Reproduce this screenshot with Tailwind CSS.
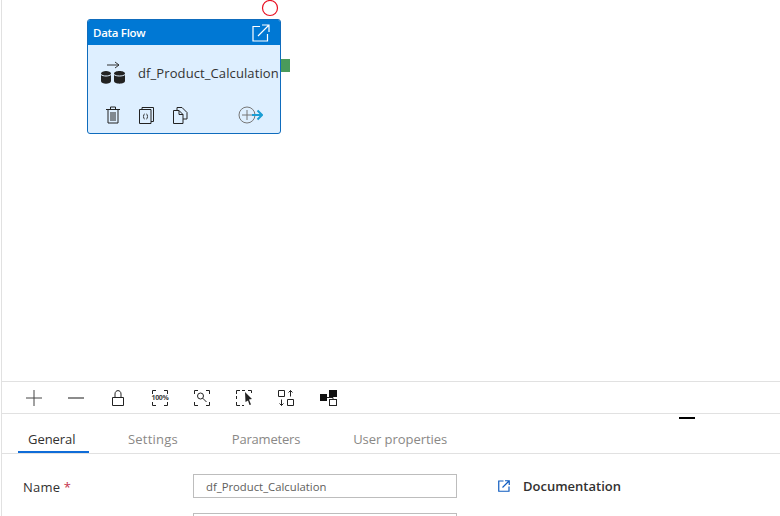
<!DOCTYPE html>
<html lang="en">
<head>
  <meta charset="UTF-8" />
  <title>Data Flow</title>
  <script src="https://cdn.jsdelivr.net/npm/@tailwindcss/browser@4"></script>
</head>
<body class="bg-white overflow-hidden font-['Open_Sans','Noto_Sans',sans-serif] text-[#323130]">
  <div class="ml-[1px] h-[516px] w-[779px] border-l border-[#e1e1e1] overflow-hidden flex flex-col">
    <!-- canvas -->
    <div class="relative h-[381px] shrink-0">
      <svg class="absolute left-[259px] top-0" width="20" height="18" viewBox="0 0 20 18" fill="none"><circle cx="9" cy="8" r="7.5" stroke="#e81123" stroke-width="1.2"/></svg>
      <div class="absolute left-[85px] top-[19px] w-[194px] h-[115px] rounded-[3px] border border-[#0f6cbd] bg-[#deefff] flex flex-col">
        <div class="h-[25px] bg-[#0078d4] rounded-t-[2px] flex items-center justify-between pl-[5px] pr-[10px] text-white">
          <span class="text-[11.5px] font-semibold tracking-[-0.3px]">Data Flow</span>
          <svg width="18" height="18" viewBox="0 0 18 18" fill="none" stroke="#fff" stroke-width="1.2"><path d="M8 2.5H1V17H15.500V10"/><path d="M6 12L17 1M10 1H17V8"/></svg>
        </div>
        <div class="flex items-center pl-[12px] mt-[15px] h-[26px]">
          <svg width="26" height="24" viewBox="0 0 26 24"><path d="M7 4H19M15 1L19 4L15 7" fill="none" stroke="#333" stroke-width="1"/><path d="M1 12.500C1 9 11 9 11 12.500V20C11 23.500 1 23.500 1 20Z" fill="#222"/><path d="M14 12.500C14 9 25 9 25 12.500V20C25 23.500 14 23.500 14 20Z" fill="#222"/><path d="M1 13.500C3 15.500 9 15.500 11 13.500M14 13.500C16 15.500 23 15.500 25 13.500" fill="none" stroke="#deefff" stroke-width="1"/></svg>
          <span class="ml-[12px] text-[13px] leading-none text-[#333] whitespace-nowrap tracking-[0.1px]">df_Product_Calculation</span>
        </div>
        <div class="flex items-center pl-[18px] mt-[19px] h-[20px]">
          <svg width="14" height="18" viewBox="0 0 14 18" fill="none" stroke="#222" stroke-width="1"><path d="M0 3.500H14M4.500 3V1H9.500V3M2 4V17H12V4M5 6V15M7 6V15M9 6V15"/></svg>
          <svg class="ml-[19px]" width="15" height="18" viewBox="0 0 15 18" fill="none" stroke="#222" stroke-width="1"><path d="M.5 3.500H12V17.500H.5ZM3 3V1.500H14.500V15.500H12"/><path d="M5.500 8C4.500 8 5 10.500 4 10.500C5 10.500 4.500 13 5.500 13M7.500 8C8.500 8 8 10.500 9 10.500C8 10.500 8.500 13 7.500 13"/></svg>
          <svg class="ml-[19px]" width="15" height="17" viewBox="0 0 15 17" fill="none" stroke="#222" stroke-width="1"><path d="M4 3.500V.500H9L14 5.500V12H10"/><path d="M.5 3.500H6L10 7.500V16.500H.5Z"/><path d="M6 3.500V7.500H10"/></svg>
          <svg class="ml-[50px]" width="25" height="18" viewBox="0 0 25 18" fill="none"><circle cx="9" cy="9" r="8" stroke="#777" stroke-width="1"/><path d="M4 9H14M9 4V14" stroke="#777" stroke-width="1"/><path d="M14 9H24M19.500 4.500L24 9L19.500 13.500" stroke="#1a9ed4" stroke-width="2"/></svg>
        </div>
        <div class="absolute left-[193px] top-[39px] w-[9px] h-[13px] bg-[#4a9a5b]"></div>
      </div>
    </div>
    <!-- toolbar -->
    <div class="relative h-[33px] shrink-0 border-y border-[#e1e1e1] flex items-center pl-[11px]">
      <div class="w-[42px] flex justify-center"><svg width="16" height="16" viewBox="0 0 16 16" stroke="#444" stroke-width="1"><path d="M0 8H16M8 0V16"/></svg></div>
      <div class="w-[42px] flex justify-center"><svg width="16" height="16" viewBox="0 0 16 16" stroke="#666" stroke-width="1.500"><path d="M0 8H16"/></svg></div>
      <div class="w-[42px] flex justify-center"><svg width="12" height="16" viewBox="0 0 12 16" fill="none" stroke="#222" stroke-width="1"><path d="M.5 7.500H11.500V15.500H.5ZM3 7.500V4C3 -.5 9 -.5 9 4V7.500"/></svg></div>
      <div class="w-[42px] flex justify-center"><div class="relative w-[16px] h-[16px] flex items-center justify-center"><svg class="absolute inset-0" width="16" height="16" viewBox="0 0 16 16" fill="none" stroke="#222" stroke-width="1"><path d="M.5 4V.5H4M12 .5H15.500V4M.5 12V15.500H4M12 15.500H15.500V12"/></svg><span class="text-[7px] font-bold leading-none text-[#444] tracking-[-0.3px]">100%</span></div></div>
      <div class="w-[42px] flex justify-center"><svg width="16" height="16" viewBox="0 0 16 16" fill="none" stroke="#222" stroke-width="1"><path d="M.5 4V.5H4M12 .5H15.500V4M.5 12V15.500H4M12 15.500H15.500V12"/><circle cx="6.500" cy="6" r="3"/><path d="M8.700 8.200L12.500 12"/></svg></div>
      <div class="w-[42px] flex justify-center"><svg width="17" height="16" viewBox="0 0 17 16" fill="none"><path d="M.5 4V.5H4M6 .5H9M.5 6V9M.5 12V15.500H4M12 .5H15.500V3M6 15.500H8" stroke="#222"/><path d="M9 2L16 9L13 9.500L15 14.500L13.500 15L12 10.500L9.500 12Z" fill="#222"/></svg></div>
      <div class="w-[42px] flex justify-center"><svg width="16" height="16" viewBox="0 0 16 16" fill="none" stroke="#222" stroke-width="1"><path d="M.5 .5H6.500V6.500H.5ZM9.500 9.500H15.500V15.500H9.500ZM12.500 6.500V.5M10.500 2.500L12.500 .5L14.500 2.500M3.500 9.500V15.500M1.500 13.500L3.500 15.500L5.500 13.500"/></svg></div>
      <div class="w-[42px] flex justify-center"><svg width="17" height="16" viewBox="0 0 17 16" fill="none"><rect x="0" y="4" width="7" height="7" fill="#111"/><rect x="9" y="0" width="8" height="7" fill="#111"/><rect x="9.500" y="9.500" width="7" height="6" stroke="#222"/><path d="M7 7.500H13V9" stroke="#222"/></svg></div>
    </div>
    <!-- tabs -->
    <div class="relative h-[40px] shrink-0 border-b border-[#e1e1e1] flex text-[13px] text-[#8a8886] pl-[16px]">
      <div class="absolute left-[677px] top-[3px] w-[16px] h-[2px] bg-black"></div>
      <div class="w-[71px] h-[39px] pt-[15px] pl-[10px] text-[#323130] border-b-2 border-[#0f6cd8] leading-[20px] tracking-[-0.05px]">General</div>
      <div class="ml-[39px] pt-[15px] leading-[20px] tracking-[0.2px]">Settings</div>
      <div class="ml-[54px] pt-[15px] leading-[20px] tracking-[-0.2px]">Parameters</div>
      <div class="ml-[53px] pt-[15px] leading-[20px] tracking-[-0.05px]">User properties</div>
    </div>
    <!-- form -->
    <div class="pl-[21px] pt-[20px] flex flex-col gap-[15px]">
      <div class="flex items-center h-[24px]">
        <div class="w-[170px] pt-[3px] text-[13px] text-[#323130] tracking-[0.2px]">Name <span class="text-[#c4314b]">*</span></div>
        <div class="w-[264px] h-[24px] border border-[#bdbdbd] pl-[12px] text-[11.3px] leading-[24px] text-[#605e5c]">df_Product_Calculation</div>
        <svg class="ml-[41px]" width="12" height="12" viewBox="0 0 12 12" fill="none" stroke="#0f5cc0" stroke-width="1.200"><path d="M5.500 1H.75V11.250H11V6.500"/><path d="M4.500 7.500L11 1M7 .75H11.250V5"/></svg>
        <span class="ml-[13px] pt-[2px] text-[13px] font-semibold text-[#323130]">Documentation</span>
      </div>
      <div class="ml-[170px] w-[264px] h-[24px] border border-[#bdbdbd]"></div>
    </div>
  </div>
</body>
</html>
